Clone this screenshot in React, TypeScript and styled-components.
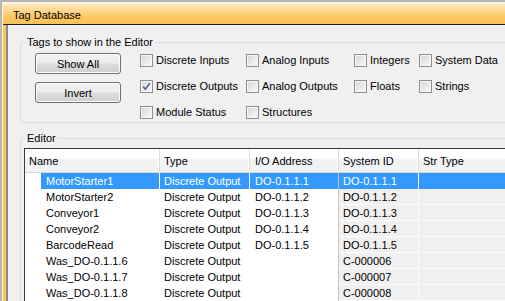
import React from 'react';
import styled, { createGlobalStyle } from 'styled-components';

const Global = createGlobalStyle`
  html, body { margin: 0; padding: 0; overflow: hidden; background: #f0f0f0; }
  body { font-family: "Liberation Sans", Arial, sans-serif; font-size: 11px; color: #000; }
  * { box-sizing: border-box; }
`;

const Window = styled.div`
  width: 560px;
  height: 301px;
  border-top: 2px solid #b5b5b5;
  border-left: 2px solid #b5b5b5;
  display: flex;
  flex-direction: column;
  overflow: hidden;
`;

const Frame = styled.div`
  flex: 1;
  min-height: 0;
  display: flex;
  flex-direction: column;
  border-top: 2px solid #fff4de;
  border-left: 1px solid #fff4de;
  background: #fcc45e;
`;

const TitleBar = styled.div`
  flex: none;
  height: 21px;
  border-bottom: 1px solid #1e1e1e;
  background: linear-gradient(#fde7b6 0%, #fdd68c 35%, #fcc761 65%, #fcc25a 100%);
  padding: 2px 0 0 10px;
  display: flex;
  align-items: center;
  font-size: 11px;
`;

const Body = styled.div`
  flex: 1;
  min-height: 0;
  margin-left: 3px;
  border-left: 2px solid #8a8a8a;
  background: #f0f0f0;
  padding: 0 12px 0 12px;
  display: flex;
  flex-direction: column;
  overflow: hidden;
`;

const Group = styled.fieldset<{ $top: number }>`
  margin: ${(p) => p.$top}px 0 0 0;
  padding: 0;
  min-width: 0;
  border: 1px solid #d5dfe5;
  border-radius: 3px;
  flex: none;
`;

const Legend = styled.legend`
  margin-left: 4px;
  padding: 0 2px;
  line-height: 12px;
  font-size: 11px;
`;

const FilterBody = styled.div`
  display: flex;
  gap: 19px;
  padding: 5px 0 3px 14px;
`;

const ButtonColumn = styled.div`
  display: flex;
  flex-direction: column;
  gap: 8px;
`;

const Button = styled.button`
  width: 86px;
  height: 21px;
  border: 1px solid #707070;
  border-radius: 3px;
  background: linear-gradient(#f2f2f2 0%, #ebebeb 48%, #dddddd 52%, #cfcfcf 100%);
  box-shadow: inset 0 0 0 1px #fbfbfb;
  font-family: inherit;
  font-size: 11px;
  color: #000;
  padding: 0;
`;

const CheckGrid = styled.div`
  margin-top: 1px;
  display: grid;
  grid-template-columns: 106px 108px 65px auto;
  grid-auto-rows: 13px;
  row-gap: 13px;
`;

const CheckItem = styled.label`
  display: flex;
  align-items: center;
  gap: 3px;
  height: 13px;
  line-height: 13px;
  white-space: nowrap;
`;

const Box = styled.span`
  width: 13px;
  height: 13px;
  flex: none;
  border: 1px solid #8f8f8f;
  background: linear-gradient(135deg, #d4d4d4 0%, #e8e8e8 50%, #fbfbfb 100%);
  box-shadow: inset 0 0 0 1px #f6f6f6;
  display: flex;
  align-items: center;
  justify-content: center;
`;

const EditorBody = styled.div`
  padding: 4px 0 0 3px;
`;

const Table = styled.div`
  border: 1px solid #3a3a3a;
  background: #fff;
  display: grid;
  grid-template-columns: 135px 90px 89px 80px 1fr;
  grid-template-rows: 24px;
  grid-auto-rows: 16px;
`;

const HeadCell = styled.div<{ $pad: number }>`
  height: 24px;
  padding-left: ${(p) => p.$pad}px;
  display: flex;
  align-items: center;
  background: linear-gradient(#ffffff 0%, #ffffff 40%, #f1f2f4 45%, #f1f2f4 100%);
  border-right: 1px solid #dcdcdc;
  border-bottom: 1px solid #d5d5d5;
  box-shadow: inset -1px 0 0 #ffffff;
  white-space: nowrap;
`;

const Cell = styled.div<{ $pad: number; $sel?: boolean; $gray?: boolean; $line?: string }>`
  height: 16px;
  padding-left: ${(p) => p.$pad}px;
  display: flex;
  align-items: center;
  white-space: nowrap;
  background: ${(p) => (p.$sel ? '#3399ff' : p.$gray ? '#f0f0f0' : '#ffffff')};
  color: ${(p) => (p.$sel ? '#ffffff' : '#000000')};
  border-right: 1px solid ${(p) => p.$line || '#ffffff'};
  border-bottom: ${(p) => (p.$gray && !p.$sel ? '1px solid #fbfbfb' : 'none')};
`;

const NameCell = styled.div`
  height: 16px;
  padding-left: 16px;
  display: flex;
  border-right: 1px solid #ffffff;
`;

const NameLabel = styled.span<{ $sel?: boolean }>`
  flex: 1;
  display: flex;
  align-items: center;
  padding-left: 5px;
  white-space: nowrap;
  background: ${(p) => (p.$sel ? '#3399ff' : 'transparent')};
  color: ${(p) => (p.$sel ? '#ffffff' : '#000000')};
`;

const Check = () => (
  <svg width="9" height="9" viewBox="0 0 9 9">
    <path d="M1.2 4.6 L3.4 7.2 L7.8 1.2" fill="none" stroke="#4b64a8" strokeWidth="1.5" />
  </svg>
);

const options: [string, boolean][][] = [
  [['Discrete Inputs', false], ['Analog Inputs', false], ['Integers', false], ['System Data', false]],
  [['Discrete Outputs', true], ['Analog Outputs', false], ['Floats', false], ['Strings', false]],
  [['Module Status', false], ['Structures', false]],
];

const rows = [
  ['MotorStarter1', 'Discrete Output', 'DO-0.1.1.1', 'DO-0.1.1.1'],
  ['MotorStarter2', 'Discrete Output', 'DO-0.1.1.2', 'DO-0.1.1.2'],
  ['Conveyor1', 'Discrete Output', 'DO-0.1.1.3', 'DO-0.1.1.3'],
  ['Conveyor2', 'Discrete Output', 'DO-0.1.1.4', 'DO-0.1.1.4'],
  ['BarcodeRead', 'Discrete Output', 'DO-0.1.1.5', 'DO-0.1.1.5'],
  ['Was_DO-0.1.1.6', 'Discrete Output', '', 'C-000006'],
  ['Was_DO-0.1.1.7', 'Discrete Output', '', 'C-000007'],
  ['Was_DO-0.1.1.8', 'Discrete Output', '', 'C-000008'],
];

export default function App() {
  return (
    <>
      <Global />
      <Window>
        <Frame>
          <TitleBar>Tag Database</TitleBar>
          <Body>
            <Group $top={11}>
              <Legend>Tags to show in the Editor</Legend>
              <FilterBody>
                <ButtonColumn>
                  <Button>Show All</Button>
                  <Button>Invert</Button>
                </ButtonColumn>
                <CheckGrid>
                  {options.map((row, ri) =>
                    row.map(([label, checked], ci) => (
                      <CheckItem key={`${ri}-${ci}`} style={{ gridRow: ri + 1, gridColumn: ci + 1 }}>
                        <Box>{checked && <Check />}</Box>
                        {label}
                      </CheckItem>
                    ))
                  )}
                </CheckGrid>
              </FilterBody>
            </Group>
            <Group $top={9}>
              <Legend>Editor</Legend>
              <EditorBody>
                <Table>
                  <HeadCell $pad={4}>Name</HeadCell>
                  <HeadCell $pad={4}>Type</HeadCell>
                  <HeadCell $pad={5}>I/O Address</HeadCell>
                  <HeadCell $pad={4}>System ID</HeadCell>
                  <HeadCell $pad={4}>Str Type</HeadCell>
                  {rows.map((r, i) => {
                    const sel = i === 0;
                    return (
                      <React.Fragment key={i}>
                        <NameCell>
                          <NameLabel $sel={sel}>{r[0]}</NameLabel>
                        </NameCell>
                        <Cell $pad={4} $sel={sel}>{r[1]}</Cell>
                        <Cell $pad={5} $sel={sel} $line="#c4c4c4">{r[2]}</Cell>
                        <Cell $pad={4} $sel={sel} $gray $line="#fbfbfb">{r[3]}</Cell>
                        <Cell $pad={4} $sel={sel} $gray></Cell>
                      </React.Fragment>
                    );
                  })}
                </Table>
              </EditorBody>
            </Group>
          </Body>
        </Frame>
      </Window>
    </>
  );
}
